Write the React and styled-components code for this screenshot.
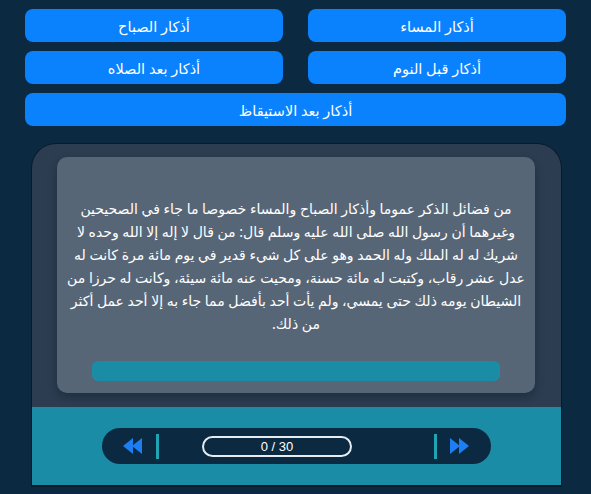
import React from 'react'
import styled, { createGlobalStyle } from 'styled-components'

const GlobalStyle = createGlobalStyle`
  html, body {
    margin: 0;
    padding: 0;
    background: #0b2a41;
  }
  body {
    font-family: "Noto Sans", "DejaVu Sans", sans-serif;
  }
`

const azkarTypes = [
  { id: 'masaa', label: 'أذكار المساء' },
  { id: 'sabah', label: 'أذكار الصباح' },
  { id: 'nawm', label: 'أذكار قبل النوم' },
  { id: 'salah', label: 'أذكار بعد الصلاه' },
  { id: 'wake', label: 'أذكار بعد الاستيقاظ', wide: true },
]

const intro =
  'من فضائل الذكر عموما وأذكار الصباح والمساء خصوصا ما جاء في الصحيحين وغيرهما أن رسول الله صلى الله عليه وسلم قال: من قال لا إله إلا الله وحده لا شريك له له الملك وله الحمد وهو على كل شيء قدير في يوم مائة مرة كانت له عدل عشر رقاب، وكتبت له مائة حسنة، ومحيت عنه مائة سيئة، وكانت له حرزا من الشيطان يومه ذلك حتى يمسي، ولم يأت أحد بأفضل مما جاء به إلا أحد عمل أكثر من ذلك.'

export default function App() {
  const current = 0
  const total = 30

  return (
    <>
      <GlobalStyle />
      <Pagina>
        <Menu dir="rtl">
          {azkarTypes.map((t) => (
            <Botao key={t.id} $wide={t.wide}>
              {t.label}
            </Botao>
          ))}
        </Menu>

        <Painel>
          <Cartao>
            <Texto dir="rtl">{intro}</Texto>
            <Barra />
          </Cartao>
          <Rodape>
            <Controles>
              <Seta aria-label="previous">
                <svg width="20" height="16" viewBox="0 0 20 16">
                  <polygon points="0,8 10,0 10,16" fill="#1f7df2" />
                  <polygon points="9,8 19,0 19,16" fill="#1f7df2" />
                </svg>
              </Seta>
              <Divisor />
              <Contador>
                {current} / {total}
              </Contador>
              <Espaco />
              <Divisor />
              <Seta aria-label="next" $right>
                <svg width="19" height="16" viewBox="0 0 19 16">
                  <polygon points="19,8 9,0 9,16" fill="#1f7df2" />
                  <polygon points="10,8 0,0 0,16" fill="#1f7df2" />
                </svg>
              </Seta>
            </Controles>
          </Rodape>
        </Painel>
      </Pagina>
    </>
  )
}

const Pagina = styled.main`
  min-height: 494px;
  padding: 9px 25px 9px;
  box-sizing: border-box;
  background: #0b2a41;
`

const Menu = styled.nav`
  display: grid;
  grid-template-columns: 1fr 1fr;
  column-gap: 25px;
  row-gap: 9px;
`

const Botao = styled.button`
  grid-column: ${(p) => (p.$wide ? '1 / -1' : 'auto')};
  height: 33px;
  border: none;
  border-radius: 8px;
  background: #0a82fd;
  color: #ffffff;
  font-family: "Noto Sans", "DejaVu Sans", sans-serif;
  font-size: 14.5px;
  cursor: pointer;
`

const Painel = styled.section`
  margin: 17px 4px 0 6px;
  background: #2c3d51;
  border: 1px solid #0a1a29;
  border-bottom-width: 2px;
  border-radius: 25px 25px 0 0;
  overflow: hidden;
`

const Cartao = styled.div`
  margin: 13px 26px 0 25px;
  padding: 40px 3px 12px;
  background: #576676;
  border-radius: 10px;
  box-shadow: 0 4px 8px rgba(10, 20, 35, 0.35);
`

const Texto = styled.p`
  margin: 0;
  color: #ffffff;
  font-size: 14px;
  line-height: 23px;
  text-align: center;
`

const Barra = styled.div`
  margin: 26px 32px 0;
  height: 20px;
  border-radius: 6px;
  background: #1a8ca6;
`

const Rodape = styled.footer`
  margin-top: 14px;
  height: 78px;
  padding-top: 21px;
  box-sizing: border-box;
  background: #1a8ca6;
  display: flex;
  justify-content: center;
  align-items: flex-start;
`

const Controles = styled.div`
  display: flex;
  align-items: center;
  width: 389px;
  height: 36px;
  padding: 0 22px 0 21px;
  box-sizing: border-box;
  border-radius: 18px;
  background: #0b2a41;
`

const Seta = styled.span`
  display: flex;
  align-items: center;
  margin: ${(p) => (p.$right ? '0 0 0 13px' : '0 13px 0 0')};
`

const Divisor = styled.span`
  width: 3px;
  height: 25px;
  background: #20a4b4;
`

const Contador = styled.span`
  margin-left: 43px;
  width: 150px;
  height: 21px;
  box-sizing: border-box;
  border: 2px solid #e6ecf0;
  border-radius: 11px;
  display: flex;
  align-items: center;
  justify-content: center;
  color: #ffffff;
  font-family: "Liberation Sans", Arial, sans-serif;
  font-size: 13px;
`

const Espaco = styled.span`
  flex: 1;
`
